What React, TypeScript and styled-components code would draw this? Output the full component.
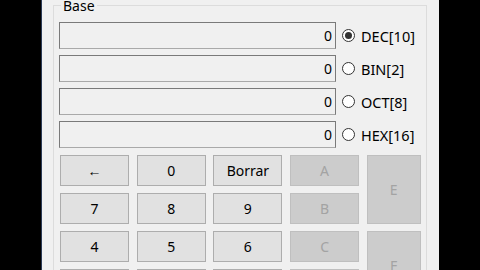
import React from 'react';
import styled, { createGlobalStyle } from 'styled-components';

const Global = createGlobalStyle`
  html, body {
    margin: 0;
    padding: 0;
    background: #000;
  }
  body {
    font-family: 'Noto Sans', 'Open Sans', sans-serif;
  }
`;

const Page = styled.div`
  display: flex;
  width: 480px;
  height: 270px;
  overflow: hidden;
  background: #000;
`;

const Side = styled.div<{ $w: number }>`
  flex: 0 0 ${(p) => p.$w}px;
`;

const Window = styled.div`
  flex: 0 0 397px;
  box-sizing: border-box;
  background: #f0f0f0;
  border-left: 1px solid #2b3a55;
  padding: 0 12px 0 11px;
`;

const Group = styled.fieldset`
  margin: -3px 0 0 0;
  padding: 8px 5px 40px 5px;
  border: 1px solid #dcdcdc;
  border-radius: 0;
  min-width: 0;
`;

const Legend = styled.legend`
  margin-left: 2px;
  padding: 0 2px;
  font-size: 14px;
  line-height: 17px;
  color: #000;
`;

const Fields = styled.div`
  display: flex;
  flex-direction: column;
  gap: 6px;
`;

const Row = styled.div`
  display: flex;
  align-items: center;
  height: 27px;
`;

const Display = styled.div`
  box-sizing: border-box;
  width: 277px;
  height: 27px;
  border: 1px solid #7a7a7a;
  border-bottom-color: #a9a9a9;
  background: #f0f0f0;
  font-size: 14px;
  line-height: 25px;
  text-align: right;
  padding-right: 3px;
  color: #000;
`;

const Radio = styled.span<{ $on?: boolean }>`
  box-sizing: border-box;
  margin-left: 6px;
  width: 13px;
  height: 13px;
  border-radius: 50%;
  border: 1px solid #333;
  background: #fff;
  display: flex;
  align-items: center;
  justify-content: center;
  &::after {
    content: '';
    width: 7px;
    height: 7px;
    border-radius: 50%;
    background: ${(p) => (p.$on ? '#333' : 'transparent')};
  }
`;

const RadioLabel = styled.span`
  margin-left: 6px;
  font-size: 14.5px;
  color: #000;
`;

const Keypad = styled.div`
  margin-top: 7px;
  margin-left: 1px;
  display: grid;
  grid-template-columns: 69px 69px 69px 69px 54px;
  grid-auto-rows: 31px;
  column-gap: 7.7px;
  row-gap: 7px;
`;

const Key = styled.button<{ $span?: number }>`
  box-sizing: border-box;
  margin: 0;
  padding: 0;
  grid-row: span ${(p) => p.$span ?? 1};
  border: 1px solid #adadad;
  background: #e1e1e1;
  color: #000;
  font-family: 'Noto Sans', 'Open Sans', sans-serif;
  font-size: 14px;
  border-radius: 0;
  &:disabled {
    background: #cccccc;
    border-color: #bfbfbf;
    color: #a3a3a3;
  }
`;

const bases = [
  { label: 'DEC[10]', on: true },
  { label: 'BIN[2]' },
  { label: 'OCT[8]' },
  { label: 'HEX[16]' },
];

export default function App() {
  return (
    <>
      <Global />
      <Page>
        <Side $w={41} />
        <Window>
          <Group>
            <Legend>Base</Legend>
            <Fields>
              {bases.map((b) => (
                <Row key={b.label}>
                  <Display>0</Display>
                  <Radio $on={b.on} />
                  <RadioLabel>{b.label}</RadioLabel>
                </Row>
              ))}
            </Fields>
            <Keypad>
              <Key>←</Key>
              <Key>0</Key>
              <Key>Borrar</Key>
              <Key disabled>A</Key>
              <Key disabled $span={2}>E</Key>
              <Key>7</Key>
              <Key>8</Key>
              <Key>9</Key>
              <Key disabled>B</Key>
              <Key>4</Key>
              <Key>5</Key>
              <Key>6</Key>
              <Key disabled>C</Key>
              <Key disabled $span={2}>F</Key>
              <Key>1</Key>
              <Key>2</Key>
              <Key>3</Key>
              <Key disabled>D</Key>
            </Keypad>
          </Group>
        </Window>
      </Page>
    </>
  );
}
